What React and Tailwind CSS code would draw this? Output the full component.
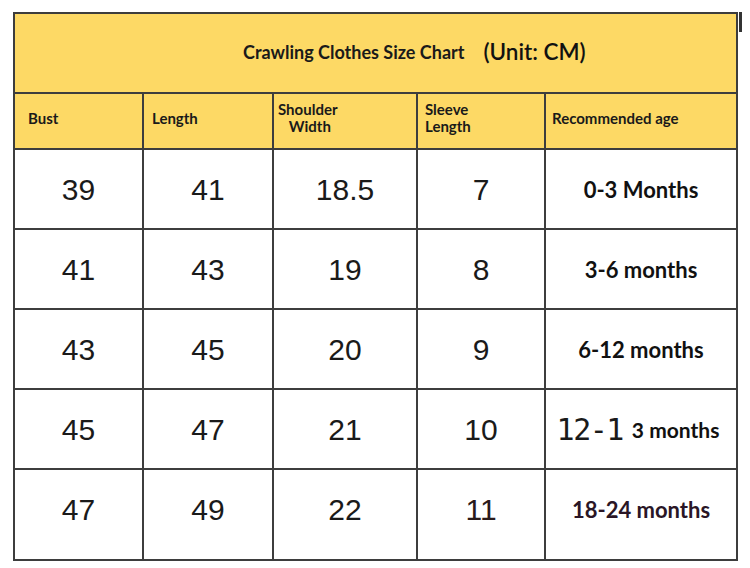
import React from "react";

const rows = [
  ["39", "41", "18.5", "7", "0-3 Months"],
  ["41", "43", "19", "8", "3-6 months"],
  ["43", "45", "20", "9", "6-12 months"],
  ["45", "47", "21", "10", "special"],
  ["47", "49", "22", "11", "18-24 months"],
];

const num = "font-['Liberation_Sans',Arial,sans-serif] text-[30px] text-[#1a1a1a]";
const lato = "font-['Lato','Liberation_Sans',sans-serif]";

function Age({ v, last }) {
  if (v === "special") {
    return (
      <div className="flex items-center pr-[6px]">
        <span className="font-['DejaVu_Sans_Mono',monospace] text-[30px] text-[#1a1a1a] tracking-[-1.5px]">12-1</span>
        <span className={`${lato} font-bold text-[21px] text-[#111] ml-[9px]`}>3 months</span>
      </div>
    );
  }
  return (
    <span className={`${lato} font-bold text-[22px] ${last ? "text-[#2a1626]" : "text-[#111]"}`}>{v}</span>
  );
}

export default function App() {
  const cell = "border-r-2 border-b-2 border-[#3d3d3d] flex items-center justify-center";
  return (
    <div className="w-[750px] h-[568px] bg-white pt-[12px] pl-[13px] flex items-start">
      <div className="w-[725px] border-l-2 border-t-2 border-[#3d3d3d] grid grid-cols-[129px_130px_144px_128px_192px]">
        <div className={`col-span-5 h-[80px] border-r-2 border-b-2 border-[#3d3d3d] bg-[#fdd965] flex items-center pl-[228px] pb-[2px] ${lato}`}>
          <span className="font-bold text-[18px] text-[#1a1a1a]">Crawling Clothes Size Chart</span>
          <span className="font-semibold text-[22.5px] text-[#111] ml-[19px]">(Unit: CM)</span>
        </div>
        {[
          ["Bust", "pl-[13px]"],
          ["Length", "pl-[8px]"],
          [<>Shoulder<br />&nbsp;&nbsp;&nbsp;Width</>, "pl-[4px]"],
          [<>Sleeve<br />Length</>, "pl-[7px]"],
          ["Recommended age", "pl-[6px]"],
        ].map(([t, p], i) => (
          <div
            key={i}
            className={`h-[56px] border-r-2 border-b-2 border-[#3d3d3d] bg-[#fdd965] flex items-center pb-[6px] ${p} ${lato} font-bold text-[15px] leading-[17px] text-[#1a1a1a]`}
          >
            <div>{t}</div>
          </div>
        ))}
        {rows.map((r, ri) => {
          const last = ri === rows.length - 1;
          return r.map((v, ci) => (
            <div
              key={`${ri}-${ci}`}
              className={`${cell} ${last ? "h-[91px] pb-[11px]" : "h-[80px] pt-[1px]"}`}
            >
              {ci < 4 ? (
                <span className={`${num} ${last && ci === 3 ? "text-[#2a1a1a]" : ""}`}>{v}</span>
              ) : (
                <Age v={v} last={last} />
              )}
            </div>
          ));
        })}
      </div>
      <div className="w-[3px] h-[20px] bg-[#333] ml-[1px]" />
    </div>
  );
}
